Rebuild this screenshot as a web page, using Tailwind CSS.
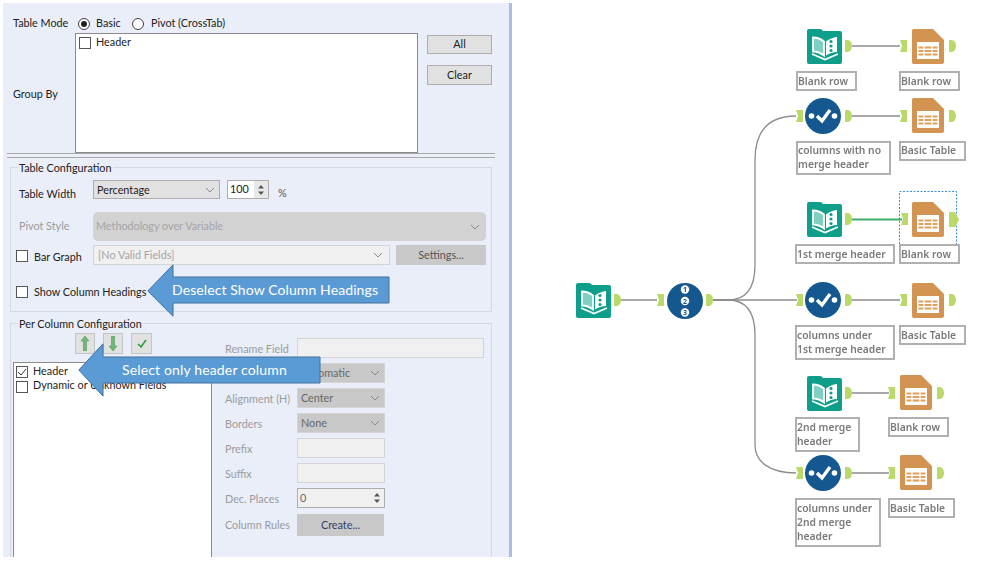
<!DOCTYPE html>
<html lang="en">
<head>
<meta charset="UTF-8" />
<title>Table tool configuration</title>
<script src="https://cdn.jsdelivr.net/npm/@tailwindcss/browser@4"></script>
</head>
<body class="bg-white">
<svg class="hidden">
  <symbol id="book" viewBox="0 0 35 35">
    <path d="M2 0h11q2 0 3 2h17q2 0 2 2v29q0 2-2 2H2q-2 0-2-2V2q0-2 2-2z" fill="#0f9e8a"/>
    <path d="M6 8.500q6 0 11 4v14q-5-4-11-4z" fill="#7fcfc3" stroke="#fff" stroke-width="1.800"/>
    <path d="M19 12.500q5-4 11-4.500v15q-6 0-11 3.500z" fill="#fff"/>
    <circle cx="24" cy="12.500" r="1.600" fill="#0f9e8a"/><circle cx="24" cy="17" r="1.600" fill="#0f9e8a"/><circle cx="24" cy="21.500" r="1.600" fill="#0f9e8a"/>
    <path d="M5 25l13 5.500 13-5.500" fill="none" stroke="#fff" stroke-width="1.800"/>
  </symbol>
  <symbol id="doc" viewBox="0 0 32 35">
    <path d="M1.500 0H21l11 11v22q0 2-2 2H1.500q-1.500 0-1.500-2V2q0-2 1.500-2z" fill="#d29450"/>
    <path d="M5 13h22v17H5z" fill="#fff"/>
    <path d="M6.500 17.500h19v2h-19zM6.500 21h19v2h-19zM6.500 24.500h19v2h-19z" fill="#dd9f5c"/>
    <path d="M12 17v12M20 17v12" stroke="#fff" stroke-width="1.200"/>
  </symbol>
  <symbol id="check-node" viewBox="0 0 36 36">
    <circle cx="18" cy="18" r="18" fill="#15588f"/>
    <circle cx="6.500" cy="18" r="2.800" fill="#fff"/><circle cx="29.500" cy="18" r="2.800" fill="#fff"/>
    <path d="M12 18l5 5 8-11" fill="none" stroke="#fff" stroke-width="3.400"/>
  </symbol>
  <symbol id="in" viewBox="0 0 7 14"><path d="M0 1h7v12H0l2-6z" fill="#b9d968"/></symbol>
  <symbol id="out" viewBox="0 0 7 14"><path d="M0 1h3q4 1 4 6t-4 6H0z" fill="#b9d968"/></symbol>
  <symbol id="chev" viewBox="0 0 10 6"><path d="M1 1l4 4 4-4" fill="none" stroke="#8a8a8a" stroke-width="1"/></symbol>
  <symbol id="spin" viewBox="0 0 10 16"><path d="M5 3L2 6.500h6zM5 13L2 9.500h6z" fill="#555"/></symbol>
</svg>

<div class="relative w-[999px] h-[561px] overflow-hidden blur-[0.35px] font-['Lato',sans-serif] text-[10.8px] text-[#222]">
  <!-- config panel -->
  <div class="ml-[3px] mt-[3px] w-[509px] h-[554px] bg-[#e9eef9] border-r-[3px] border-[#a9bde0] pl-[7px] overflow-hidden">
    <div class="mt-[11px] h-[18px] flex items-center pl-[3px]">
      <span class="w-[65px]">Table Mode</span>
      <span class="w-3 h-3 rounded-full border border-[#444] bg-white flex items-center justify-center relative top-[1px]"><span class="w-[6px] h-[6px] rounded-full bg-[#222]"></span></span>
      <span class="ml-[6px] w-[36px]">Basic</span>
      <span class="w-3 h-3 rounded-full border border-[#444] bg-white relative top-[1px]"></span>
      <span class="ml-[7px]">Pivot (CrossTab)</span>
    </div>
    <div class="mt-[1px] flex">
      <div class="w-[65px] pl-[3px] self-center relative top-[1px]">Group By</div>
      <div class="w-[343px] h-[120px] bg-white border border-[#8b8b8b] pl-[3px] pt-[2px] flex items-start gap-[5px]">
        <span class="w-3 h-3 border border-[#555] mt-[1px]"></span><span class="-mt-[2px]">Header</span>
      </div>
      <div class="ml-[9px] mt-[2px] w-[65px] flex flex-col gap-[11px]">
        <div class="h-[19px] bg-[#e1e1e1] border border-[#adadad] flex items-center justify-center">All</div>
        <div class="h-[20px] bg-[#e1e1e1] border border-[#adadad] flex items-center justify-center">Clear</div>
      </div>
    </div>
    <div class="-ml-[3px] w-[488px] h-[5px] border-y border-[#a8a8a8]"></div>

    <!-- table configuration -->
    <div class="relative mt-[9px] w-[482px] h-[145px] border border-[#d4d9e4] pt-[12px]">
      <span class="absolute -top-[8px] left-[7px] px-[1px] bg-[#e9eef9]">Table Configuration</span>
      <div class="flex items-center h-[19px] pl-[8px]">
        <span class="w-[74px] relative top-[5px]">Table Width</span>
        <div class="w-[127px] h-[19px] bg-[#e1e1e1] border border-[#adadad] pl-[3px] pr-[4px] flex items-center justify-between"><span class="relative top-[1px]">Percentage</span><svg class="w-[10px] h-[6px]"><use href="#chev"/></svg></div>
        <div class="ml-[7px] w-[42px] h-[19px] bg-white border border-[#adadad] pl-[2px] flex items-center justify-between">100<span class="w-[14px] h-[17px] bg-[#e8e8e8] flex items-center justify-center"><svg class="w-[10px] h-[16px]"><use href="#spin"/></svg></span></div>
        <span class="ml-[9px] text-[#555] relative top-[4px]">%</span>
      </div>
      <div class="flex items-center h-[29px] mt-[13px] pl-[8px] text-[#9b9b9b]">
        <span class="w-[74px]">Pivot Style</span>
        <div class="w-[393px] h-[29px] bg-[#d2d2d2] rounded-[5px] pl-[3px] pr-[6px] flex items-center justify-between text-[#a5a5a5]">Methodology over Variable<svg class="w-[10px] h-[6px]"><use href="#chev"/></svg></div>
      </div>
      <div class="flex items-center h-[20px] mt-[4px] pl-[5px]">
        <span class="w-3 h-3 border border-[#555] bg-white relative top-[1px]"></span>
        <span class="ml-[6px] w-[59px] relative top-[2px]">Bar Graph</span>
        <div class="w-[297px] h-[20px] bg-[#f0f0f0] border border-[#d4d4d4] pl-[4px] pr-[6px] flex items-center justify-between text-[#a5a5a5]">[No Valid Fields]<svg class="w-[10px] h-[6px]"><use href="#chev"/></svg></div>
        <div class="ml-[6px] w-[90px] h-[20px] bg-[#c9c9c9] flex items-center justify-center text-[#555]">Settings...</div>
      </div>
      <div class="flex items-center h-[20px] mt-[17px] pl-[5px]">
        <span class="w-3 h-3 border border-[#555] bg-white"></span>
        <span class="ml-[6px]">Show Column Headings</span>
      </div>
    </div>

    <!-- per column configuration -->
    <div class="relative mt-[11px] w-[482px] h-[260px] border border-[#d4d9e4] flex">
      <span class="absolute -top-[8px] left-[7px] px-[1px] bg-[#e9eef9]">Per Column Configuration</span>
      <div class="ml-[2px] w-[199px] pt-[9px]">
        <div class="ml-[62px] flex gap-[8px]">
          <div class="w-[20px] h-[21px] bg-[#e1e1e1] border border-[#c4c4c4] flex items-center justify-center"><svg width="8" height="15" viewBox="0 0 8 15"><path d="M4 0L8 5H5.500V15H2.500V5H0z" fill="#6fb878" stroke="#3c8f4a" stroke-width=".5"/></svg></div>
          <div class="w-[20px] h-[21px] bg-[#e1e1e1] border border-[#c4c4c4] flex items-center justify-center"><svg width="8" height="15" viewBox="0 0 8 15"><path d="M4 15L8 10H5.500V0H2.500V10H0z" fill="#6fb878" stroke="#3c8f4a" stroke-width=".5"/></svg></div>
          <div class="w-[21px] h-[21px] bg-[#e1e1e1] border border-[#c4c4c4] flex items-center justify-center"><svg width="10" height="9" viewBox="0 0 10 9"><path d="M1 5l3 3 5-7" fill="none" stroke="#1f9a2c" stroke-width="1.400"/></svg></div>
        </div>
        <div class="mt-[8px] h-[220px] bg-white border border-[#8b8b8b] pl-[2px] pt-[2px]">
          <div class="flex items-center h-[14px] gap-[5px]">
            <span class="w-3 h-3 border border-[#555] flex items-center justify-center"><svg width="10" height="9" viewBox="0 0 10 9"><path d="M1 4l3 3 5-6" fill="none" stroke="#333" stroke-width="1"/></svg></span><span class="-mt-[2px]">Header</span>
          </div>
          <div class="flex items-center h-[15px] gap-[5px]">
            <span class="w-3 h-3 border border-[#555]"></span><span class="-mt-[3px]">Dynamic or Unknown Fields</span>
          </div>
        </div>
      </div>
      <div class="ml-[13px] pt-[14px] flex flex-col gap-[5px] text-[#9b9b9b]">
        <div class="flex items-center h-[20px]"><span class="w-[72px] relative top-[1px]">Rename Field</span><div class="w-[187px] h-[20px] bg-[#f0f0f0] border border-[#d4d4d4]"></div></div>
        <div class="flex items-center h-[20px]"><span class="w-[72px]"></span><div class="w-[88px] h-[20px] bg-[#c8c8c8] border border-[#d4d4d4] pl-[3px] pr-[4px] flex items-center justify-between text-[#666]">Automatic<svg class="w-[10px] h-[6px]"><use href="#chev"/></svg></div></div>
        <div class="flex items-center h-[20px]"><span class="w-[72px] relative top-[1px]">Alignment (H)</span><div class="w-[88px] h-[20px] bg-[#c8c8c8] border border-[#d4d4d4] pl-[3px] pr-[4px] flex items-center justify-between text-[#666]">Center<svg class="w-[10px] h-[6px]"><use href="#chev"/></svg></div></div>
        <div class="flex items-center h-[20px]"><span class="w-[72px] relative top-[1px]">Borders</span><div class="w-[88px] h-[20px] bg-[#c8c8c8] border border-[#d4d4d4] pl-[3px] pr-[4px] flex items-center justify-between text-[#666]">None<svg class="w-[10px] h-[6px]"><use href="#chev"/></svg></div></div>
        <div class="flex items-center h-[20px]"><span class="w-[72px] relative top-[1px]">Prefix</span><div class="w-[88px] h-[20px] bg-[#f0f0f0] border border-[#d4d4d4]"></div></div>
        <div class="flex items-center h-[20px]"><span class="w-[72px] relative top-[1px]">Suffix</span><div class="w-[88px] h-[20px] bg-[#f0f0f0] border border-[#d4d4d4]"></div></div>
        <div class="flex items-center h-[20px]"><span class="w-[72px] relative top-[1px]">Dec. Places</span><div class="w-[88px] h-[20px] bg-[#f0f0f0] border border-[#adadad] pl-[2px] flex items-center justify-between text-[#666]">0<svg class="w-[10px] h-[16px] mr-[2px]"><use href="#spin"/></svg></div></div>
        <div class="flex items-center h-[22px] mt-[1px]"><span class="w-[72px]">Column Rules</span><div class="w-[87px] h-[22px] bg-[#c8c8c8] flex items-center justify-center text-[#2f3f6b]">Create...</div></div>
      </div>
    </div>
  </div>

  <!-- callouts -->
  <div class="absolute left-[147px] top-[264px] w-[243px] h-[53px]">
    <svg class="absolute inset-0" width="243" height="53" viewBox="0 0 243 53"><path d="M.8 27L26 .8V13H242V39H26v13.200z" fill="#5b9bd5" stroke="#41719c"/></svg>
    <span class="absolute left-[25px] top-[16px] font-['Lato',sans-serif] text-[14px] leading-[20px] text-white tracking-[.1px] whitespace-nowrap">Deselect Show Column Headings</span>
  </div>
  <div class="absolute left-[78px] top-[343px] w-[243px] h-[54px]">
    <svg class="absolute inset-0" width="243" height="54" viewBox="0 0 243 54"><path d="M.8 27L25 .8V14H242V40H25v13.200z" fill="#5b9bd5" stroke="#41719c"/></svg>
    <span class="absolute left-[44px] top-[17px] font-['Lato',sans-serif] text-[14px] leading-[20px] text-white tracking-[.15px] whitespace-nowrap">Select only header column</span>
  </div>

  <!-- workflow canvas -->
  <div class="absolute inset-0 font-['Noto_Sans',sans-serif] text-[10.3px] font-semibold text-[#7a7a7a] leading-[14px]">
    <svg class="absolute inset-0" width="999" height="561" viewBox="0 0 999 561" fill="none" stroke="#8d8d8d" stroke-width="1.300">
      <path d="M621 300H657M713 300H797M852 46H900M852 116H900M852 300H900M852 393H889M852 473H889"/>
      <path d="M713 300H728C745 300 755 290 755 265V160C755 130 770 116 796 116"/>
      <path d="M713 300H728C745 300 755 310 755 335V445C755 462 770 473 796 473"/>
      <path d="M852 219.500H902" stroke="#45ad6b" stroke-width="2"/>
      <path d="M899.500 244V191.500H956.500V244" stroke="#3b8fd9" stroke-dasharray="2 1.500" stroke-width="1"/>
    </svg>

    <!-- row 1 -->
    <svg class="absolute left-[807px] top-[29px] w-[35px] h-[35px]"><use href="#book"/></svg>
    <svg class="absolute left-[845px] top-[39px] w-[7px] h-[14px]"><use href="#out"/></svg>
    <svg class="absolute left-[900px] top-[39px] w-[7px] h-[14px]"><use href="#in"/></svg>
    <svg class="absolute left-[912px] top-[29px] w-[32px] h-[35px]"><use href="#doc"/></svg>
    <svg class="absolute left-[949px] top-[39px] w-[7px] h-[14px]"><use href="#out"/></svg>
    <div class="absolute left-[796px] top-[71px] w-[61px] h-[20px] border-2 border-[#b0b0b0] pt-[1px]">Blank row</div>
    <div class="absolute left-[899px] top-[71px] w-[61px] h-[20px] border-2 border-[#b0b0b0] pt-[1px]">Blank row</div>

    <!-- row 2 -->
    <svg class="absolute left-[796px] top-[109px] w-[7px] h-[14px]"><use href="#in"/></svg>
    <svg class="absolute left-[805px] top-[98px] w-[36px] h-[36px]"><use href="#check-node"/></svg>
    <svg class="absolute left-[845px] top-[109px] w-[7px] h-[14px]"><use href="#out"/></svg>
    <svg class="absolute left-[900px] top-[109px] w-[7px] h-[14px]"><use href="#in"/></svg>
    <svg class="absolute left-[912px] top-[98px] w-[32px] h-[35px]"><use href="#doc"/></svg>
    <svg class="absolute left-[949px] top-[109px] w-[7px] h-[14px]"><use href="#out"/></svg>
    <div class="absolute left-[796px] top-[141px] w-[95px] h-[34px] border-2 border-[#b0b0b0]">columns with no<br>merge header</div>
    <div class="absolute left-[899px] top-[141px] w-[67px] h-[20px] border-2 border-[#b0b0b0]">Basic Table</div>

    <!-- row 3, selected -->
    <svg class="absolute left-[807px] top-[202px] w-[35px] h-[35px]"><use href="#book"/></svg>
    <svg class="absolute left-[845px] top-[212px] w-[7px] h-[14px]"><use href="#out"/></svg>
    <svg class="absolute left-[901px] top-[212px] w-[7px] h-[14px]"><use href="#in"/></svg>
    <svg class="absolute left-[912px] top-[202px] w-[32px] h-[35px]"><use href="#doc"/></svg>
    <svg class="absolute left-[949px] top-[212px] w-[10px] h-[15px]" viewBox="0 0 10 15"><path d="M0 0H6L10 7.500L6 15H0z" fill="#b9d968"/></svg>
    <div class="absolute left-[795px] top-[244px] w-[100px] h-[20px] border-2 border-[#b0b0b0] pt-[1px]">1st merge header</div>
    <div class="absolute left-[899px] top-[244px] w-[61px] h-[20px] border-2 border-[#b0b0b0] pt-[1px]">Blank row</div>

    <!-- row 4 -->
    <svg class="absolute left-[576px] top-[283px] w-[35px] h-[35px]"><use href="#book"/></svg>
    <svg class="absolute left-[614px] top-[293px] w-[7px] h-[14px]"><use href="#out"/></svg>
    <svg class="absolute left-[657px] top-[293px] w-[7px] h-[14px]"><use href="#in"/></svg>
    <svg class="absolute left-[667px] top-[283px] w-[36px] h-[36px]" viewBox="0 0 36 36">
      <circle cx="18" cy="18" r="18" fill="#15588f"/>
      <circle cx="18" cy="6.500" r="4.200" fill="#fff"/><circle cx="18" cy="18" r="4.200" fill="#fff"/><circle cx="18" cy="29.500" r="4.200" fill="#fff"/>
      <text x="18" y="9" text-anchor="middle" font-size="7" font-weight="700" fill="#15588f" font-family="Noto Sans">1</text>
      <text x="18" y="20.500" text-anchor="middle" font-size="7" font-weight="700" fill="#15588f" font-family="Noto Sans">2</text>
      <text x="18" y="32" text-anchor="middle" font-size="7" font-weight="700" fill="#15588f" font-family="Noto Sans">3</text>
    </svg>
    <svg class="absolute left-[706px] top-[293px] w-[7px] h-[14px]"><use href="#out"/></svg>
    <svg class="absolute left-[796px] top-[293px] w-[7px] h-[14px]"><use href="#in"/></svg>
    <svg class="absolute left-[805px] top-[282px] w-[36px] h-[36px]"><use href="#check-node"/></svg>
    <svg class="absolute left-[845px] top-[293px] w-[7px] h-[14px]"><use href="#out"/></svg>
    <svg class="absolute left-[900px] top-[293px] w-[7px] h-[14px]"><use href="#in"/></svg>
    <svg class="absolute left-[912px] top-[283px] w-[32px] h-[35px]"><use href="#doc"/></svg>
    <svg class="absolute left-[949px] top-[293px] w-[7px] h-[14px]"><use href="#out"/></svg>
    <div class="absolute left-[795px] top-[325px] w-[100px] h-[35px] border-2 border-[#b0b0b0] pt-[1px]">columns under<br>1st merge header</div>
    <div class="absolute left-[899px] top-[325px] w-[67px] h-[20px] border-2 border-[#b0b0b0] pt-[1px]">Basic Table</div>

    <!-- row 5 -->
    <svg class="absolute left-[807px] top-[376px] w-[35px] h-[35px]"><use href="#book"/></svg>
    <svg class="absolute left-[845px] top-[386px] w-[7px] h-[14px]"><use href="#out"/></svg>
    <svg class="absolute left-[888px] top-[386px] w-[7px] h-[14px]"><use href="#in"/></svg>
    <svg class="absolute left-[900px] top-[375px] w-[32px] h-[35px]"><use href="#doc"/></svg>
    <svg class="absolute left-[937px] top-[386px] w-[7px] h-[14px]"><use href="#out"/></svg>
    <div class="absolute left-[795px] top-[417px] w-[65px] h-[35px] border-2 border-[#b0b0b0] pt-[1px]">2nd merge<br>header</div>
    <div class="absolute left-[888px] top-[417px] w-[61px] h-[20px] border-2 border-[#b0b0b0] pt-[1px]">Blank row</div>

    <!-- row 6 -->
    <svg class="absolute left-[796px] top-[466px] w-[7px] h-[14px]"><use href="#in"/></svg>
    <svg class="absolute left-[805px] top-[455px] w-[36px] h-[36px]"><use href="#check-node"/></svg>
    <svg class="absolute left-[845px] top-[466px] w-[7px] h-[14px]"><use href="#out"/></svg>
    <svg class="absolute left-[888px] top-[466px] w-[7px] h-[14px]"><use href="#in"/></svg>
    <svg class="absolute left-[900px] top-[455px] w-[32px] h-[35px]"><use href="#doc"/></svg>
    <svg class="absolute left-[937px] top-[466px] w-[7px] h-[14px]"><use href="#out"/></svg>
    <div class="absolute left-[795px] top-[498px] w-[86px] h-[49px] border-2 border-[#b0b0b0] pt-[1px]">columns under<br>2nd merge<br>header</div>
    <div class="absolute left-[888px] top-[498px] w-[67px] h-[20px] border-2 border-[#b0b0b0] pt-[1px]">Basic Table</div>
  </div>
</div>
</body>
</html>
